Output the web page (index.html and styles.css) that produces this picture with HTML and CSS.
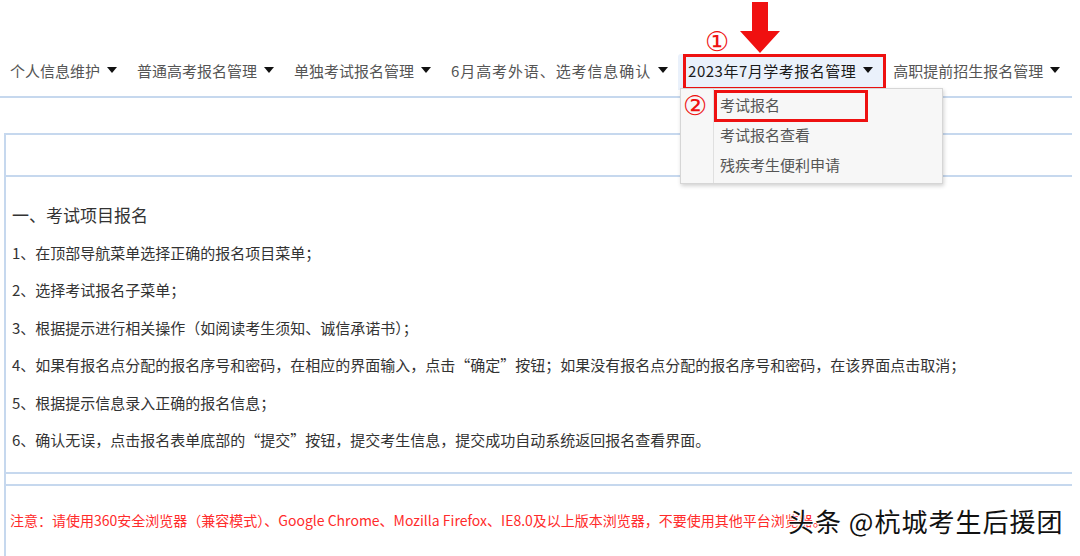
FILE: index.html
```html
<!DOCTYPE html>
<html lang="zh-CN">
<head>
<meta charset="utf-8">
<title>报名系统</title>
<link rel="stylesheet" href="styles.css">
</head>
<body>
<div class="page">
  <svg class="annot-arrow" width="44" height="54" viewBox="0 0 44 54">
    <polygon points="14,2 30,2 30,31 42,31 22,53 2,31 14,31" fill="#f01010"/>
  </svg>
  <nav class="nav">
    <div class="nav-item">个人信息维护<span class="caret"></span></div>
    <div class="nav-item">普通高考报名管理<span class="caret"></span></div>
    <div class="nav-item">单独考试报名管理<span class="caret"></span></div>
    <div class="nav-item wide">6月高考外语、选考信息确认<span class="caret"></span></div>
    <div class="nav-item active">2023年7月学考报名管理<span class="caret"></span>
      <span class="mark mark1">①</span>
      <div class="dropdown">
        <div class="dd-item first">考试报名</div>
        <div class="dd-item">考试报名查看</div>
        <div class="dd-item">残疾考生便利申请</div>
        <span class="mark mark2">②</span>
      </div>
    </div>
    <div class="nav-item">高职提前招生报名管理<span class="caret"></span></div>
  </nav>

  <div class="panel">
    <div class="panel-head"></div>
    <div class="panel-body">
      <h3 class="title">一、考试项目报名</h3>
      <p>1、在顶部导航菜单选择正确的报名项目菜单；</p>
      <p>2、选择考试报名子菜单；</p>
      <p>3、根据提示进行相关操作（如阅读考生须知、诚信承诺书）；</p>
      <p>4、如果有报名点分配的报名序号和密码，在相应的界面输入，点击“确定”按钮；如果没有报名点分配的报名序号和密码，在该界面点击取消；</p>
      <p>5、根据提示信息录入正确的报名信息；</p>
      <p>6、确认无误，点击报名表单底部的“提交”按钮，提交考生信息，提交成功自动系统返回报名查看界面。</p>
    </div>
    <div class="panel-gap"></div>
    <div class="panel-note">注意：请使用360安全浏览器（兼容模式）、Google Chrome、Mozilla Firefox、IE8.0及以上版本浏览器，不要使用其他平台浏览器。</div>
  </div>

  <div class="watermark">头条 @杭城考生后援团</div>
</div>
</body>
</html>
```
FILE: styles.css
```css
*, *::before, *::after { box-sizing: border-box; }
html, body {
  margin: 0;
  padding: 0;
  background: #fff;
}
body {
  font-family: "Noto Sans CJK SC", "Noto Sans", sans-serif;
  color: #333;
  overflow: hidden;
}
.page {
  position: relative;
  width: 1080px;
  height: 556px;
}
.annot-arrow {
  position: absolute;
  left: 738px;
  top: 0;
}
.nav {
  width: 1072px;
  display: flex;
  padding: 54px 0 6px 0;
  border-bottom: 2px solid #c6d8ee;
}
.nav-item {
  position: relative;
  display: flex;
  align-items: center;
  height: 36px;
  padding: 0 10px 4px 10px;
  font-size: 15px;
  color: #555;
  white-space: nowrap;
}
.nav-item.wide {
  letter-spacing: 0.9px;
}
.caret {
  display: inline-block;
  width: 0;
  height: 0;
  margin-left: 7px;
  border-left: 5.5px solid transparent;
  border-right: 5.5px solid transparent;
  border-top: 6px solid #111;
}
.nav-item.active {
  color: #1a1a1a;
  background: #eaf1fb;
  border-radius: 3px 3px 0 0;
  letter-spacing: 0.5px;
}
.nav-item.active::after {
  content: "";
  position: absolute;
  left: 5px;
  right: -3px;
  top: 0;
  bottom: 0;
  border: 3px solid #ee1111;
}
.mark {
  position: absolute;
  color: #ee1111;
  font-size: 27px;
  line-height: 26px;
  font-family: "DejaVu Sans", sans-serif;
  letter-spacing: 0;
}
.mark1 {
  left: 27px;
  top: -25px;
}
.dropdown {
  position: absolute;
  left: 2px;
  top: 34px;
  width: 263px;
  padding: 1px 0 3px 33px;
  background: #f7f7f7;
  border: 1px solid #d6d6d6;
  box-shadow: 1px 2px 4px rgba(0, 0, 0, 0.18);
  z-index: 5;
  letter-spacing: 0;
}
.dropdown::before {
  content: "";
  position: absolute;
  left: 32px;
  top: 0;
  bottom: 0;
  border-left: 1px solid #e0e0e0;
}
.dd-item {
  position: relative;
  height: 30px;
  line-height: 30px;
  padding-left: 6px;
  font-size: 15px;
  color: #555;
}
.dd-item.first::after {
  content: "";
  position: absolute;
  left: 0;
  top: 0;
  width: 154px;
  height: 32px;
  border: 3px solid #ee1111;
}
.mark2 {
  left: 2px;
  top: 4px;
}
.panel {
  margin: 35px 0 0 4px;
  width: 1068px;
  border-left: 2px solid #c6d8ee;
  border-top: 2px solid #c6d8ee;
  height: 424px;
}
.panel-head {
  height: 42px;
  border-bottom: 2px solid #c6d8ee;
}
.panel-body {
  padding: 19px 0 13px 6px;
  border-bottom: 2px solid #c6d8ee;
}
.panel-body .title {
  margin: 0;
  font-size: 17px;
  font-weight: normal;
  line-height: 37.5px;
  color: #333;
}
.panel-body p {
  margin: 0;
  font-size: 15px;
  line-height: 37.5px;
  color: #333;
  white-space: nowrap;
}
.panel-gap {
  height: 12px;
  border-bottom: 2px solid #c6d8ee;
}
.panel-note {
  padding: 19px 0 0 4px;
  font-size: 14px;
  line-height: 30px;
  color: #ff2b2b;
  white-space: nowrap;
}
.watermark {
  position: absolute;
  left: 788px;
  top: 504px;
  font-size: 26px;
  line-height: 34px;
  color: #111;
  letter-spacing: 1px;
  text-shadow: 0 0 2px #fff, 0 0 2px #fff, 1px 1px 1px #fff, -1px -1px 1px #fff;
  z-index: 10;
}
```
